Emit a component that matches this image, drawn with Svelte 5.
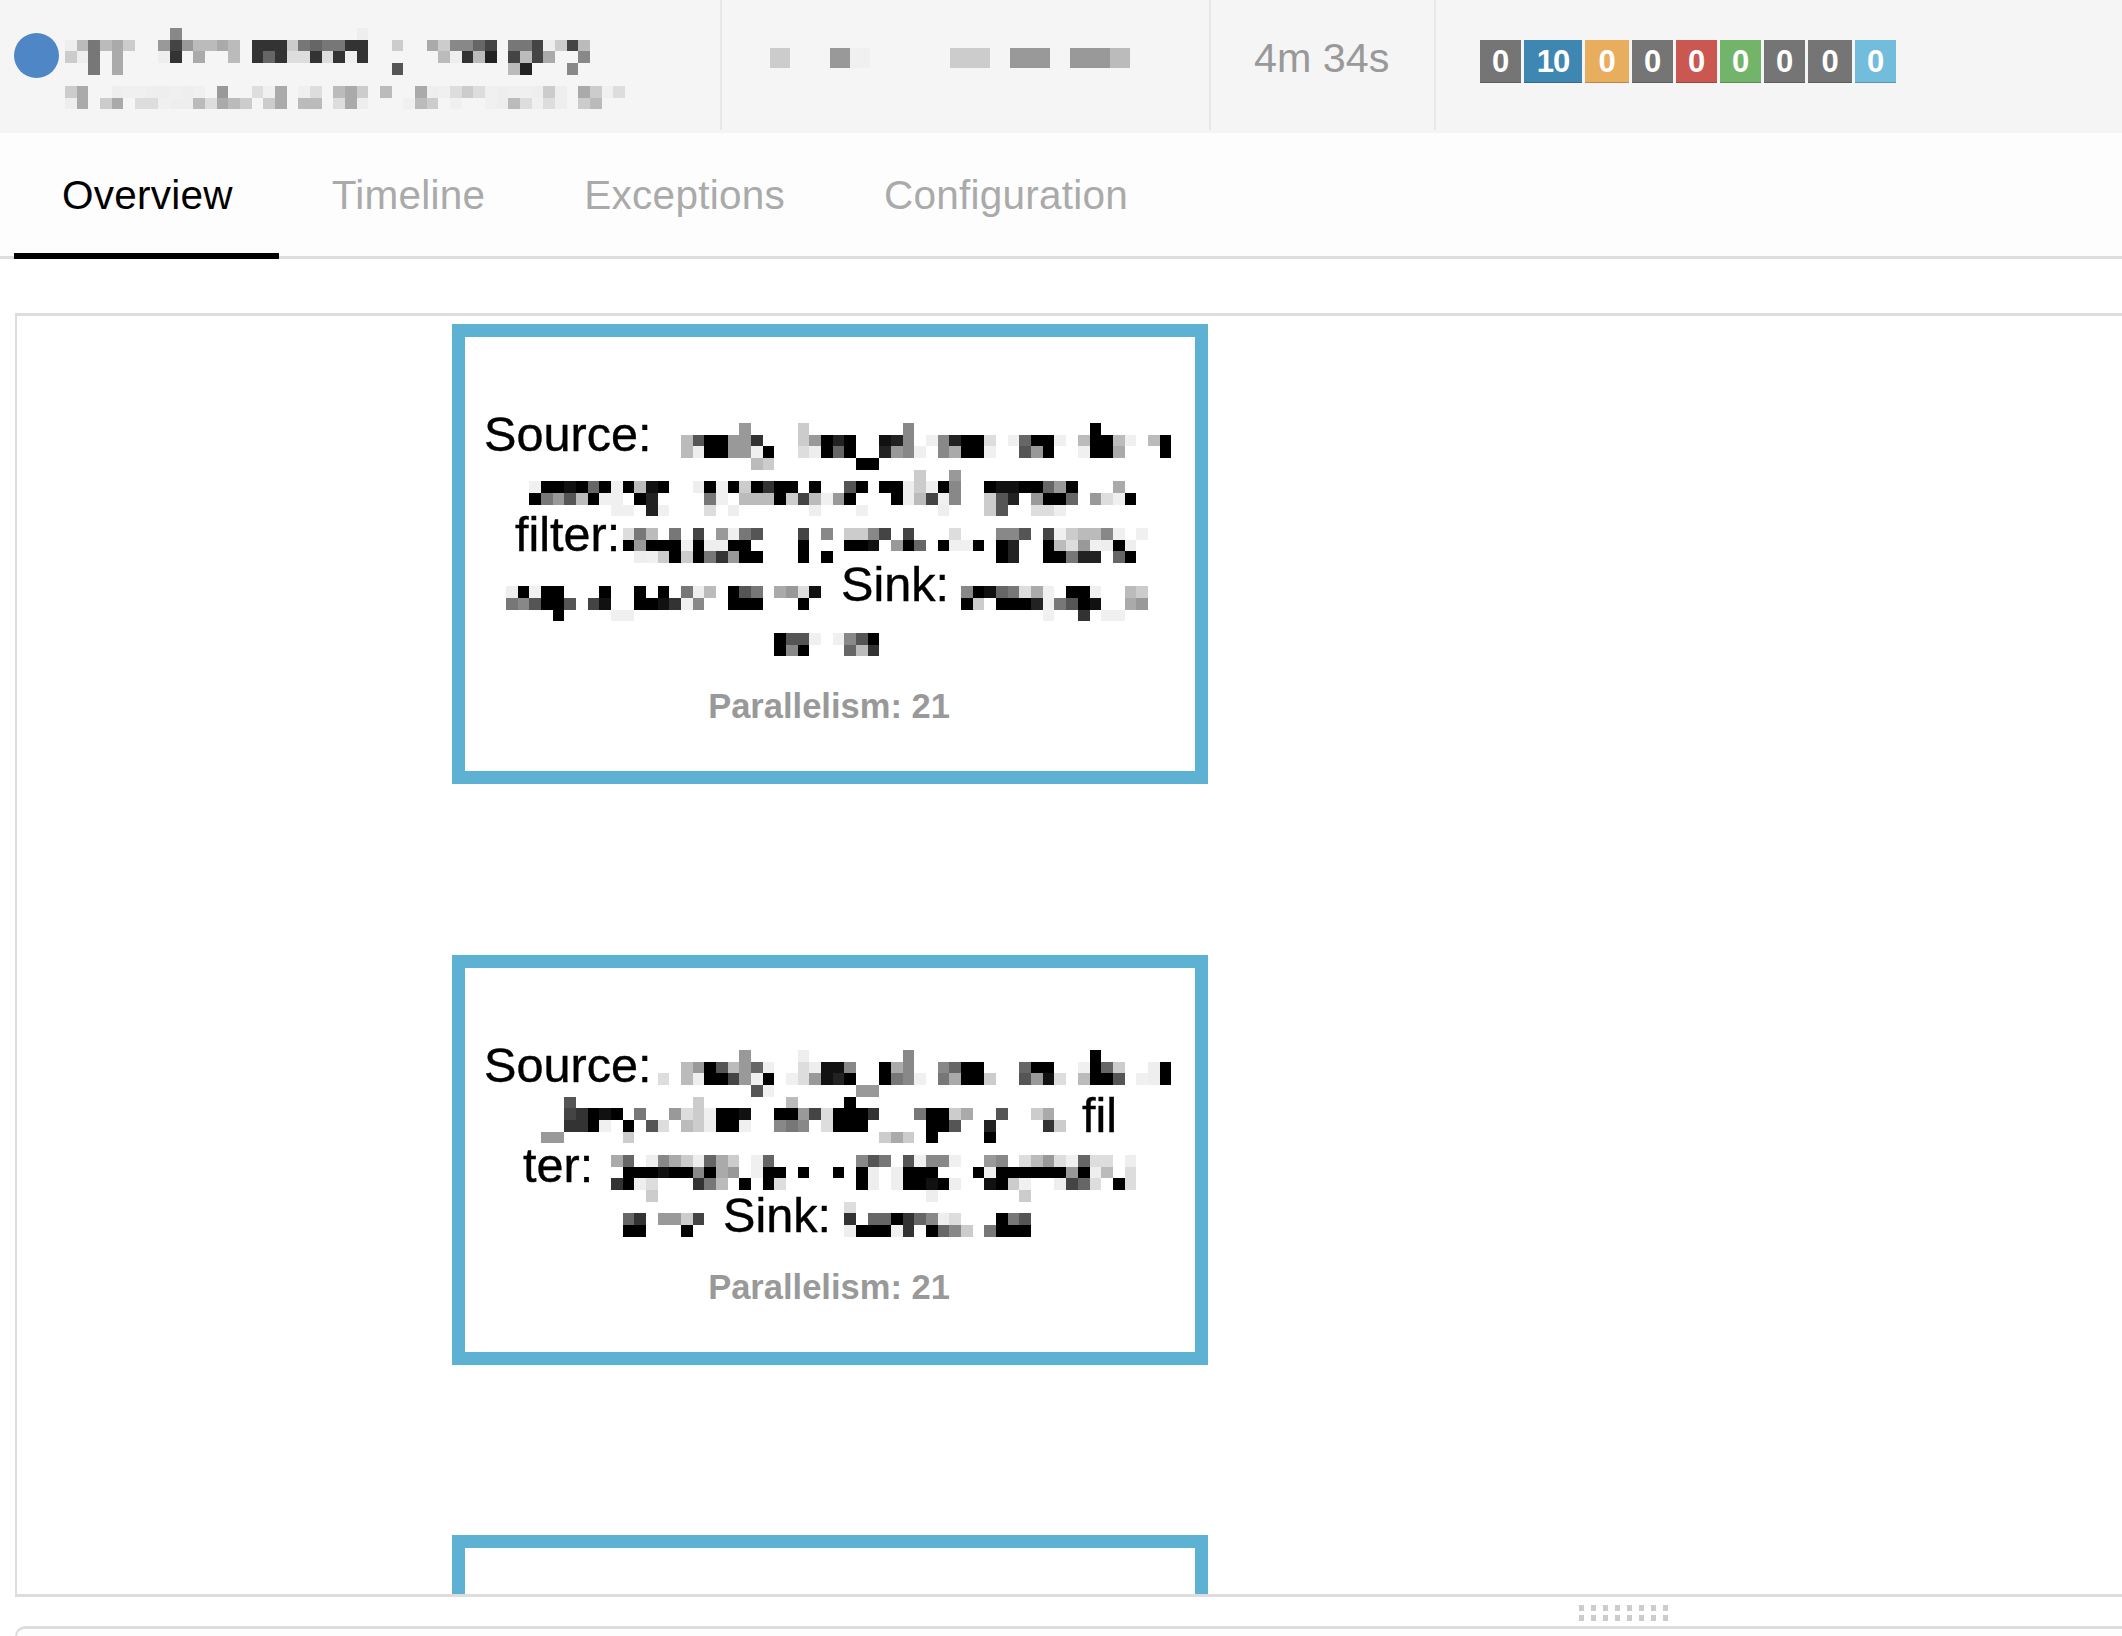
<script>
  // redacted text is pixelated in the source, so it is kept as grey blocks.
  // each row: "col:digits", one hex digit per cell, 0 = black
  const CELL = 11.67

  const title = [
    '9:8 25:e',
    '0:eb7bac 8:949bbab 16:333c7677 24:33 28:c 31:ac8864 38:774ec4b',
    '0:ce7 4:a 8:e3 11:a 14:b 16:363dd3d3f3 32:be3b2 38:4b4a 44:8',
    '2:7 4:a 28:5 38:b2 43:8'
  ]
  const subtitle = [
    '0:ca 4:effeefef 13:9 16:dfa 20:fd 23:bac 27:b 30:aefdcdfeffece 44:acfd',
    '0:ea 3:ca 6:ddfeebdabc 17:ca 20:bb 23:dae 29:fbc 33:f 36:febdfde 44:cb'
  ]
  const stats = ['0:c 3:9f 9:cc 12:99 15:99b']

  const badges = [
    { n: 0, c: 'grey' },
    { n: 10, c: 'blue two' },
    { n: 0, c: 'orange wide' },
    { n: 0, c: 'grey' },
    { n: 0, c: 'red' },
    { n: 0, c: 'green' },
    { n: 0, c: 'grey' },
    { n: 0, c: 'grey wide' },
    { n: 0, c: 'sky' }
  ]

  const tabs = ['Overview', 'Timeline', 'Exceptions', 'Configuration']

  const nodes = [
    {
      top: 8,
      height: 460,
      blurTop: 86,
      lines: [
        { text: 'Source:', left: 19 },
        { text: '', left: 0 },
        { text: 'filter:', left: 50 },
        { text: 'Sink:', left: 376 },
        { text: '', left: 0 }
      ],
      blur: [
        '20:9 25:c 34:8 50:0',
        '15:b500993 25:c9020 32:128 36:f8200d 43:f600f 49:b00bf 55:b0',
        '15:be0099f0 25:de060 32:298f 37:8a00f 44:590 49:f00a 56:0',
        '21:bc 30:00',
        '35:c 38:9',
        '2:f001060f0b10 16:e0f0c0300 26:0 29:50 32:00ecf08 41:01100690 52:a',
        '2:0795b0ff 11:02 17:7f 20:bbb0c4bf90 33:0eb4f8 41:c52 45:9006 50:9df0',
        '9:ff 12:2f 17:d 19:e 26:e 30:f 37:e 41:c5 45:dde',
        '',
        '10:d7b 14:7 16:4 18:9f75 25:4 27:8 29:cc84 34:4 38:d 42:885 46:4fcbb8f 54:f',
        '10:09000f0ee00 25:0 29:001 33:906 37:0ff0 42:02 46:0bd9fe0e',
        '11:efc0c073900 25:0 27:0 42:02 46:00722 52:60',
        '',
        '',
        '0:e0f00 8:0 11:0 13:0 15:7eb 19:057 23:a9d1 39:80167daf 48:00f 53:bc',
        '0:785005 7:41 11:0013f8 19:000 25:0 39:0c 42:0002f7501 53:a9',
        '4:0 9:ff 46:f 49:3 51:ff',
        '',
        '23:055f 28:f850',
        '23:080 29:6b3'
      ]
    },
    {
      top: 639,
      height: 410,
      blurTop: 82.4,
      lines: [
        { text: 'Source:', left: 19 },
        { text: 'fil', left: 617 },
        { text: 'ter:', left: 58 },
        { text: 'Sink:', left: 258 }
      ],
      blur: [
        '20:9 25:e 34:8 50:0',
        '15:b905b96f 25:de118 32:0a8 37:8600 44:600 49:f06c 55:e0',
        '13:d 15:be0049f0 24:fd9120 32:078f 37:7a00c 44:591d 49:b005 54:fe0',
        '21:5f 30:99',
        '5:5 16:c 24:b 29:0',
        '5:43010 11:7 14:9dcf001 23:0094d0003 35:700ca 42:5 45:ca',
        '5:330f 10:0 12:5d 15:bce00f 23:878 27:d000 36:005 41:2 46:3c',
        '3:99 10:c 32:cac 36:0 41:0',
        '',
        '9:a6 12:e8ace6ac 21:f6 30:857 34:5f88f 41:98 44:db9df6dd 53:e',
        '10:00010080a9 21:f00 25:0 28:0 30:0e 33:e000 40:0f00000090eb 53:d',
        '9:30ed 16:37b 20:0 22:0d 30:0e 33:e0010e 41:10cf 47:e46d 52:0d',
        '12:c 36:e 44:c',
        '29:d',
        '10:63 13:99c4 29:3 31:660368ed 42:075',
        '10:00 15:0 29:e000f3 36:068c 41:7000'
      ]
    },
    { top: 1219, height: 410, blurTop: 0, lines: [], blur: [], empty: true }
  ]

  const shade = (ch) => {
    if (ch === 'f') return '#f0f0f0'
    const v = parseInt(ch, 16) * 17
    return `rgb(${v},${v},${v})`
  }

  const parse = (rows) =>
    rows.flatMap((row, y) =>
      row.split(' ').filter(Boolean).flatMap((seg) => {
        const [col, digits] = seg.split(':')
        return [...digits].map((ch, i) => ({ x: +col + i, y, fill: shade(ch) }))
      })
    )

  const cols = (rows) => Math.max(1, ...parse(rows).map((c) => c.x + 1))
</script>

{#snippet blocks(rows, cell, cls)}
  <svg class={cls} width={cols(rows) * cell} height={rows.length * cell} shape-rendering="crispEdges" aria-hidden="true">
    {#each parse(rows) as c}
      <rect x={c.x * cell} y={c.y * cell} width={cell} height={cell} fill={c.fill} />
    {/each}
  </svg>
{/snippet}

<main>
  <header>
    <section class="name">
      <span class="dot"></span>
      <div class="names">
        {@render blocks(title, CELL, 'title')}
        {@render blocks(subtitle, CELL, 'sub')}
      </div>
    </section>
    <section class="times">
      {@render blocks(stats, 20, 'stats')}
    </section>
    <section class="duration">4m 34s</section>
    <section class="tags">
      {#each badges as b}
        <span class="badge {b.c}">{b.n}</span>
      {/each}
    </section>
  </header>

  <nav>
    {#each tabs as tab, i}
      <div class="tab" class:active={i === 0}>{tab}</div>
    {/each}
  </nav>

  <div class="canvas">
    {#each nodes as node}
      <div class="node" style="top: {node.top}px; height: {node.height}px">
        {#if !node.empty}
          <div class="lines">
            {#each node.lines as line}
              <div class="line" style="margin-left: {line.left}px">{line.text}</div>
            {/each}
          </div>
          <div class="para">Parallelism: 21</div>
          <div class="blur" style="top: {node.blurTop}px">
            {@render blocks(node.blur, CELL, 'blur-svg')}
          </div>
        {/if}
      </div>
    {/each}
  </div>

  <div class="handle">
    <div class="grip">
      {#each Array(16) as _}
        <i></i>
      {/each}
    </div>
  </div>

  <div class="bottom"></div>
</main>

<style>
  :global(body) {
    margin: 0;
    overflow: hidden;
    background: #fff;
    font-family: "Liberation Sans", Arial, sans-serif;
  }

  main {
    width: 2122px;
    height: 1636px;
    overflow: hidden;
  }

  header {
    display: flex;
    height: 133px;
    background: #f5f5f5;
  }

  header section {
    box-sizing: border-box;
    height: 130px;
    border-right: 2px solid #e7e7e7;
  }

  svg {
    display: block;
  }

  .name {
    display: flex;
    gap: 6px;
    width: 722px;
    padding: 28px 0 0 14px;
  }

  .dot {
    width: 45px;
    height: 45px;
    margin-top: 5px;
    border-radius: 50%;
    background: #4e86c6;
  }

  .names {
    display: flex;
    flex-direction: column;
    gap: 11px;
  }

  .times {
    width: 489px;
    padding: 48px 0 0 48px;
  }

  .duration {
    width: 225px;
    padding: 36px 0 0 43px;
    color: #999;
    font-size: 41.3px;
    line-height: 44px;
  }

  .tags {
    display: flex;
    gap: 3px;
    padding: 40px 0 0 44px;
    border-right: none !important;
  }

  .badge {
    box-sizing: border-box;
    width: 41px;
    height: 43px;
    border-bottom: 1px solid rgba(0, 0, 0, 0.2);
    color: #fff;
    font-size: 31px;
    font-weight: bold;
    line-height: 43px;
    text-align: center;
  }

  .badge.wide {
    width: 44px;
  }

  .badge.two {
    width: 58px;
    letter-spacing: -1px;
  }

  .grey { background: #757575; }
  .blue { background: #3e87b3; }
  .orange { background: #e8ae5e; }
  .red { background: #ca5851; }
  .green { background: #72b46a; }
  .sky { background: #72bcdc; }

  nav {
    box-sizing: border-box;
    display: flex;
    gap: 5px;
    height: 126px;
    padding-left: 14px;
    background: #fdfdfd;
    border-bottom: 3px solid #ddd;
  }

  .tab {
    height: 123px;
    padding: 0 46px 0 48px;
    color: #aaa;
    font-size: 40.5px;
    letter-spacing: 0.25px;
    line-height: 124px;
  }

  .tab.active {
    box-sizing: border-box;
    height: 126px;
    border-bottom: 6px solid #000;
    border-radius: 3px 3px 0 0;
    color: #000;
  }

  .canvas {
    position: relative;
    box-sizing: border-box;
    width: 2140px;
    height: 1284px;
    margin: 54px 0 0 15px;
    overflow: hidden;
    border: solid #ddd;
    border-width: 3px 0 3px 2px;
    background: #fff;
  }

  .node {
    position: absolute;
    left: 435px;
    box-sizing: border-box;
    width: 756px;
    padding-top: 72px;
    border: 13px solid #5db1d3;
    background: #fff;
  }

  .line {
    height: 50px;
    color: #000;
    font-size: 48.6px;
    line-height: 50px;
    white-space: nowrap;
    -webkit-text-stroke: 0.4px #000;
  }

  .para {
    margin-top: 22px;
    padding-right: 2px;
    color: #999;
    font-size: 34.5px;
    font-weight: bold;
    line-height: 50px;
    text-align: center;
  }

  .blur {
    position: absolute;
    left: 41px;
  }

  .handle {
    display: flex;
    height: 29px;
    padding: 8px 0 0 1579px;
    box-sizing: border-box;
  }

  .grip {
    display: grid;
    grid-template-columns: repeat(8, 5px);
    grid-auto-rows: 6px;
    column-gap: 7px;
    row-gap: 4px;
  }

  .grip i {
    background: #ccc;
  }

  .bottom {
    box-sizing: border-box;
    width: 2140px;
    height: 30px;
    margin-left: 15px;
    border: solid #ddd;
    border-width: 3px 0 0 2px;
    border-top-left-radius: 10px;
    background: #fdfdfd;
  }
</style>
